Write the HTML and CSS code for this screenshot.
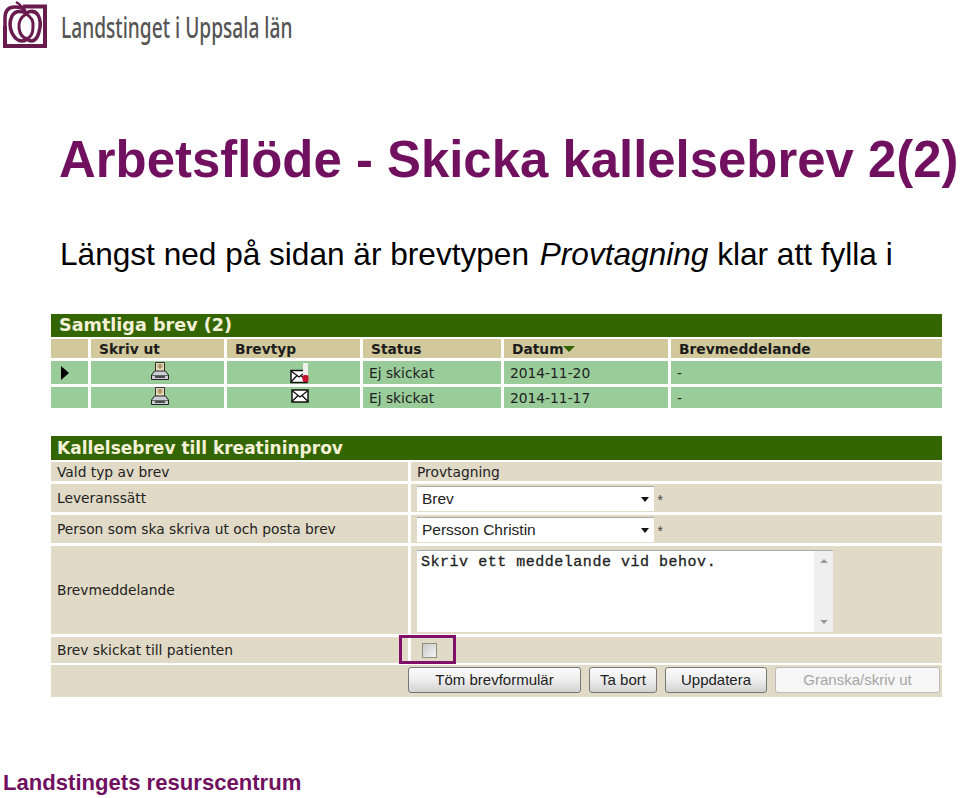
FILE: index.html
```html
<!DOCTYPE html>
<html lang="sv">

<head>
  <meta charset="UTF-8">
  <title>Arbetsflöde - Skicka kallelsebrev 2(2)</title>
  <link rel="stylesheet" href="styles.css">
</head>

<body>
  <!-- logo -->
  <header class="logo">
    <svg class="logo-mark" width="46" height="50" viewBox="0 0 46 50" fill="none" stroke="#6a1b4d">
      <path d="M21 6.500H43V46H3V26" stroke-width="4" />
      <path d="M3 30V18Q3 7 13 7Q21 7 23 11" stroke-width="3.500" />
      <path d="M24 13Q21 6 14 2" stroke-width="2.500" />
      <path d="M24 13Q14 9 10 16Q6 24 10 33Q14 41 20 41Q23 41 25 39Q27 41 30 41Q35 40 37 32Q40 22 36 15Q32 9 24 13Z" stroke-width="3.500" />
      <path d="M24 14Q16 19 17 28Q18 37 25 39Q31 36 31 27Q32 18 24 14Z" stroke-width="3" />
    </svg>
    <span class="logo-text">Landstinget i Uppsala län</span>
  </header>

  <h1>Arbetsflöde - Skicka kallelsebrev 2(2)</h1>
  <p class="lead">Längst ned på sidan är brevtypen <em>Provtagning</em> klar att fylla i</p>

  <!-- samtliga brev -->
  <section class="panel letters">
    <h2>Samtliga brev (2)</h2>
    <div class="letter-row head">
      <div></div>
      <div>Skriv ut</div>
      <div>Brevtyp</div>
      <div>Status</div>
      <div>Datum<i class="sort"></i></div>
      <div>Brevmeddelande</div>
    </div>
    <div class="letter-row first">
      <div class="center"><i class="marker"></i></div>
      <div class="center">
        <svg class="printer" width="20" height="20" viewBox="0 0 20 20">
          <path d="M5.500 1.500H14.500V10.500H5.500Z" fill="#e8dcb8" stroke="#333" />
          <path d="M7.500 4H12.500M7.500 6H12.500M10 3V8" stroke="#8f7a4c" />
          <path d="M4.500 10H15.500L18.500 14V18.500H1.500V14Z" fill="#c9ced6" stroke="#222" />
          <path d="M2 14.500H18" stroke="#666" />
          <path d="M5 16H15" stroke="#222" stroke-width="1.500" />
        </svg>
      </div>
      <div class="center">
        <svg class="envelope alert" width="20" height="22" viewBox="0 0 20 22">
          <path d="M1 8.500H17V20.500H1Z" fill="#fff" stroke="#111" stroke-width="1.500" />
          <path d="M1 9L9 15L17 9M1 20L7 13.500M17 20L11 13.500" fill="none" stroke="#111" stroke-width="1.300" />
          <rect x="13" y="1" width="5" height="14" fill="#f2f0ee" />
          <rect x="12.500" y="13" width="6" height="7" rx="2" fill="#c4122f" />
        </svg>
      </div>
      <div>Ej skickat</div>
      <div>2014-11-20</div>
      <div>-</div>
    </div>
    <div class="letter-row">
      <div></div>
      <div class="center">
        <svg class="printer" width="20" height="20" viewBox="0 0 20 20">
          <path d="M5.500 1.500H14.500V10.500H5.500Z" fill="#e8dcb8" stroke="#333" />
          <path d="M7.500 4H12.500M7.500 6H12.500M10 3V8" stroke="#8f7a4c" />
          <path d="M4.500 10H15.500L18.500 14V18.500H1.500V14Z" fill="#c9ced6" stroke="#222" />
          <path d="M2 14.500H18" stroke="#666" />
          <path d="M5 16H15" stroke="#222" stroke-width="1.500" />
        </svg>
      </div>
      <div class="center">
        <svg class="envelope" width="18" height="14" viewBox="0 0 18 14">
          <path d="M1 1H17V13H1Z" fill="#fff" stroke="#111" stroke-width="1.500" />
          <path d="M1 1.500L9 8L17 1.500M1 12.500L7 6.500M17 12.500L11 6.500" fill="none" stroke="#111" stroke-width="1.300" />
        </svg>
      </div>
      <div>Ej skickat</div>
      <div>2014-11-17</div>
      <div>-</div>
    </div>
  </section>

  <!-- brevformular -->
  <section class="panel form">
    <h2>Kallelsebrev till kreatininprov</h2>
    <div class="form-row type">
      <div>Vald typ av brev</div>
      <div>Provtagning</div>
    </div>
    <div class="form-row delivery">
      <div>Leveranssätt</div>
      <div class="field"><span class="select">Brev<i class="caret"></i></span><span class="req">*</span></div>
    </div>
    <div class="form-row person">
      <div>Person som ska skriva ut och posta brev</div>
      <div class="field"><span class="select">Persson Christin<i class="caret"></i></span><span class="req">*</span></div>
    </div>
    <div class="form-row message">
      <div>Brevmeddelande</div>
      <div class="field">
        <div class="textarea">
          <span class="textarea-text">Skriv ett meddelande vid behov.</span>
          <div class="scrollbar"><i class="up"></i><i class="down"></i></div>
        </div>
      </div>
    </div>
    <div class="form-row sent">
      <div>Brev skickat till patienten</div>
      <div class="field"><span class="checkbox"></span><span class="highlight"></span></div>
    </div>
    <div class="actions">
      <span class="btn clear">Töm brevformulär</span>
      <span class="btn remove">Ta bort</span>
      <span class="btn update">Uppdatera</span>
      <span class="btn review">Granska/skriv ut</span>
    </div>
  </section>

  <footer>Landstingets resurscentrum</footer>
</body>

</html>
```

FILE: styles.css
```css
* {
  margin: 0;
  padding: 0;
  box-sizing: border-box;
}

body {
  width: 960px;
  height: 798px;
  overflow: hidden;
  background: #fff;
  font-family: "Liberation Sans", Arial, sans-serif;
}

/* logo */
.logo {
  height: 50px;
  padding-left: 2px;
  display: flex;
  align-items: flex-start;
}
.logo-mark {
  flex: none;
}
.logo-text {
  margin: 8px 0 0 13px;
  font-family: "Noto Sans", sans-serif;
  font-size: 29px;
  font-weight: 500;
  line-height: 38px;
  color: #555;
  white-space: nowrap;
  transform: scaleX(.66);
  transform-origin: left center;
}

h1 {
  margin: 81px 0 0 59px;
  font-size: 50.900px;
  line-height: 58px;
  font-weight: bold;
  color: #70105f;
  white-space: nowrap;
}
.lead {
  margin: 47px 0 0 60px;
  font-size: 31.600px;
  line-height: 36px;
  color: #000;
  white-space: nowrap;
}
.lead em {
  margin-left: 2px;
}

/* tabeller */
.panel {
  width: 891px;
  margin-left: 51px;
  font-family: "DejaVu Sans", Verdana, sans-serif;
  font-size: 13.800px;
  color: #222;
}
.panel h2 {
  background: #336600;
  color: #f4f1d8;
  font-size: 17px;
  font-weight: bold;
  white-space: nowrap;
  padding-left: 8px;
}

.letters {
  margin-top: 42px;
}
.letters h2 {
  height: 23px;
  line-height: 23px;
  font-size: 17.600px;
}
.letter-row {
  display: grid;
  grid-template-columns: 37px 133px 133px 138px 164px 1fr;
  grid-template-rows: minmax(0, 1fr);
  column-gap: 3px;
  margin-top: 3px;
  height: 23px;
  line-height: 24px;
}
.letter-row.head {
  margin-top: 2px;
  height: 19px;
  line-height: 20px;
  font-weight: bold;
  color: #1c1c1c;
}
.letter-row.head > div {
  background: #d1c99b;
  padding-left: 8px;
}
.letter-row:last-child {
  height: 21px;
  line-height: 22px;
}
.letter-row > div {
  background: #99cc99;
  padding-left: 6px;
  white-space: nowrap;
}
.letter-row .center {
  padding-left: 0;
  display: flex;
  align-items: center;
  justify-content: center;
}
.sort {
  display: inline-block;
  margin-left: -1px;
  border: 6px solid transparent;
  border-top: 6px solid #336600;
  border-bottom: 0;
  vertical-align: 2px;
}
.marker {
  margin-right: 9px;
  border: 7px solid transparent;
  border-left: 8px solid #000;
  border-right: 0;
}
.printer {
  margin: 0 0 4px 5px;
}
.envelope {
  margin: 0 0 3px 12px;
}
.envelope.alert {
  margin: 0 0 0 12px;
}

.form {
  margin-top: 28px;
}
.form h2 {
  height: 24px;
  line-height: 25px;
  padding-left: 6px;
}
.form-row {
  display: grid;
  grid-template-columns: 357px 1fr;
  column-gap: 3px;
  margin-top: 3px;
}
.form-row > div {
  background: #e0dac6;
  padding-left: 6px;
  display: flex;
  align-items: center;
  white-space: nowrap;
}
.form-row.type {
  margin-top: 2px;
  height: 19px;
}
.form-row.delivery {
  height: 28px;
}
.form-row.person {
  height: 28px;
}
.form-row.message {
  height: 88px;
}
.form-row.sent {
  height: 26px;
}
.form-row .field {
  position: relative;
}
.select {
  width: 237px;
  height: 25px;
  display: flex;
  align-items: center;
  padding-left: 5px;
  background: #fff;
  border-top: 1px solid #aaa;
  font-family: "Liberation Sans", Arial, sans-serif;
  font-size: 15.500px;
  color: #222;
  position: relative;
}
.caret {
  position: absolute;
  right: 5px;
  top: 10px;
  border: 4px solid transparent;
  border-top: 5px solid #111;
  border-bottom: 0;
}
.req {
  margin: 8px 0 0 2px;
  font-family: "Liberation Mono", monospace;
  font-size: 14px;
  color: #444;
}
.textarea {
  width: 416px;
  height: 82px;
  margin-top: 2px;
  display: flex;
  justify-content: space-between;
  background: #fff;
  border-top: 1px solid #aaa;
  position: relative;
}
.textarea-text {
  margin: 3px 0 0 4px;
  font-family: "Liberation Mono", "Courier New", monospace;
  font-size: 15px;
  letter-spacing: .520px;
  color: #222;
  -webkit-text-stroke: .3px #222;
}
.scrollbar {
  width: 19px;
  background: #efefef;
  display: flex;
  flex-direction: column;
  justify-content: space-between;
  align-items: center;
  padding: 8px 0;
}
.up {
  border: 4px solid transparent;
  border-bottom: 4px solid #999;
  border-top: 0;
}
.down {
  border: 4px solid transparent;
  border-top: 4px solid #999;
  border-bottom: 0;
}
.checkbox {
  width: 15px;
  height: 15px;
  margin-left: 5px;
  border: 1px solid #8f8f80;
  background: linear-gradient(135deg, #c9c9c9, #f4f4f4);
}
.highlight {
  position: absolute;
  left: -12px;
  top: -2px;
  width: 57px;
  height: 29px;
  border: 3px solid #80106a;
}
.actions {
  margin-top: 2px;
  height: 32px;
  background: #e0dac6;
  display: flex;
  align-items: center;
  padding: 0 2px 3px 357px;
  font-family: "Liberation Sans", Arial, sans-serif;
  font-size: 15px;
}
.btn {
  height: 26px;
  display: flex;
  align-items: center;
  justify-content: center;
  border: 1px solid #777;
  border-radius: 3px;
  background: linear-gradient(#fafafa, #f0f0f0 45%, #d2d2d2);
  color: #222;
  white-space: nowrap;
}
.clear {
  width: 173px;
}
.remove {
  width: 68px;
  margin-left: 8px;
}
.update {
  width: 102px;
  margin-left: 8px;
}
.review {
  width: 165px;
  margin-left: 8px;
  border-color: #bbb;
  background: #f6f6f6;
  color: #a5a5a5;
}

footer {
  margin: 72px 0 0 3px;
  font-size: 22.100px;
  line-height: 27px;
  font-weight: bold;
  color: #70105f;
  white-space: nowrap;
}
```
